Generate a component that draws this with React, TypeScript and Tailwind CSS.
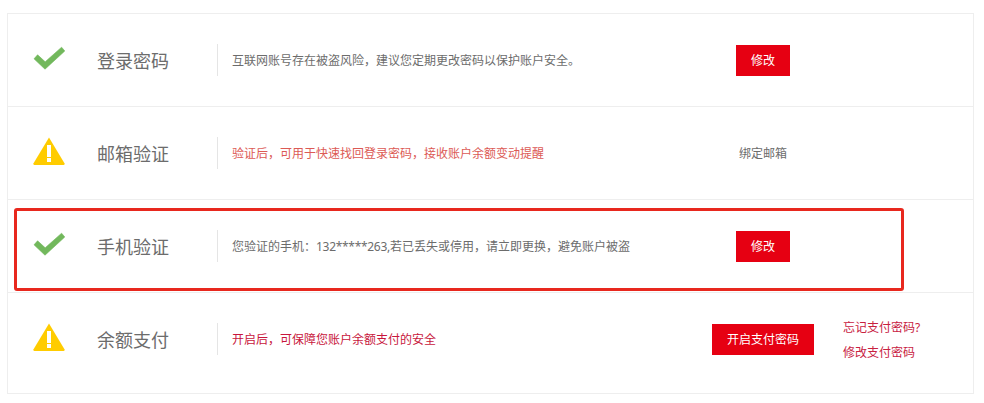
function Check() {
  return (
    <svg width="32" height="28" viewBox="0 0 32 28" className="shrink-0">
      <path d="M1 14.8 L4.6 10.8 L12.2 17.8 L28.6 3.2 L31.8 7 L12 25.2 Z" fill="#72b85c" stroke="#72b85c" strokeWidth="0.6" strokeLinejoin="round" />
    </svg>
  );
}

function Warn() {
  return (
    <svg width="32" height="28" viewBox="0 0 32 28" className="shrink-0">
      <path d="M16 0.4 L31.6 26.6 Q32 28 30.6 28 L1.4 28 Q0 28 0.4 26.6 Z" fill="#ffcc00" />
      <rect x="14" y="8" width="4" height="12" fill="#fff" />
      <rect x="14" y="21" width="4" height="4" fill="#fff" />
    </svg>
  );
}

function Row({
  icon,
  title,
  desc,
  descClass,
  children,
  last,
}: {
  icon: React.ReactNode;
  title: string;
  desc: React.ReactNode;
  descClass: string;
  children: React.ReactNode;
  last?: boolean;
}) {
  return (
    <div className={last ? "flex items-start h-[100px] pt-[30px] pl-[25px]" : "flex items-start h-[93px] pt-[30px] pl-[25px] border-b border-[#eeeeee]"}>
      {icon}
      <div className="ml-[32px] w-[120px] h-[32px] text-[18px] leading-[34px] text-[#6c6c6c]">{title}</div>
      <div className={`w-[481px] h-[32px] border-l border-[#e5e5e5] pl-[14px] text-[12px] leading-[34px] ${descClass}`}>{desc}</div>
      {children}
    </div>
  );
}

function Btn({ w, children }: { w: string; children: React.ReactNode }) {
  return (
    <div className="w-[130px] flex justify-center mt-px">
      <div className={`${w} h-[31px] bg-[#e60012] text-white text-[12px] leading-[31px] text-center`}>{children}</div>
    </div>
  );
}

export default function App() {
  return (
    <div className="relative w-[984px] h-[403px] bg-white pt-[13px] pl-[7px] font-['Noto_Sans','Noto_Sans_CJK_SC',sans-serif]">
      <div className="w-[967px] h-[381px] border border-[#eeeeee]">
        <Row icon={<Check />} title="登录密码" desc="互联网账号存在被盗风险，建议您定期更改密码以保护账户安全。" descClass="text-[#6c6c6c]">
          <Btn w="w-[54px]">修改</Btn>
        </Row>
        <Row icon={<Warn />} title="邮箱验证" desc="验证后，可用于快速找回登录密码，接收账户余额变动提醒" descClass="text-[#dc5a55]">
          <div className="w-[130px] h-[32px] text-center text-[12px] leading-[34px] text-[#6c6c6c]">绑定邮箱</div>
        </Row>
        <Row
          icon={<Check />}
          title="手机验证"
          desc={
            <>
              您验证的手机：<span className="tracking-[-0.3px]">132*****263,</span>若已丢失或停用，请立即更换，避免账户被盗
            </>
          }
          descClass="text-[#6c6c6c]"
        >
          <Btn w="w-[54px]">修改</Btn>
        </Row>
        <Row last icon={<Warn />} title="余额支付" desc="开启后，可保障您账户余额支付的安全" descClass="text-[#c8163c]">
          <Btn w="w-[102px]">开启支付密码</Btn>
          <div className="ml-[15px] -mt-[8px] text-[12px] leading-[25px] text-[#c8213f]">
            <div>忘记支付密码?</div>
            <div>修改支付密码</div>
          </div>
        </Row>
      </div>
      <div className="absolute left-[14px] top-[208px] w-[890px] h-[83px] border-[3px] border-[#e8281e] rounded-[3px]" />
    </div>
  );
}
